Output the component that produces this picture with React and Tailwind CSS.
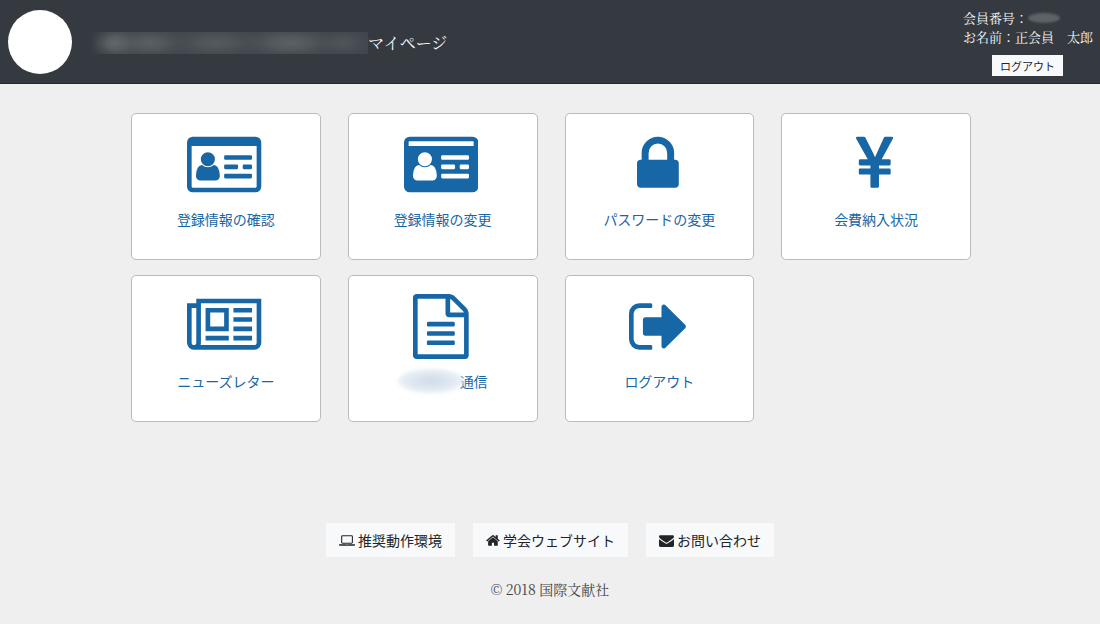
import React from "react";

function Glyph({ viewBox, className, children }) {
  return (
    <svg viewBox={viewBox} className={className} fill="currentColor" aria-hidden="true">
      {children}
    </svg>
  );
}

const person =
  "M382 182a194 194 0 1 1 388 0a194 194 0 1 1 -388 0z M414 340q72 62 162 62t162 -62q74 6 112 70q56 92 56 228q0 60 -37 96t-82 36h-422q-45 0 -82 -36t-37 -96q0 -136 56 -228q38 -64 112 -70z";
const bar = (x, y, w) =>
  `M${x + 32} ${y}h${w - 64}q32 0 32 32v64q0 32 -32 32h-${w - 64}q-32 0 -32 -32v-64q0 -32 32 -32z`;
const cardLines = [bar(1024, 640, 768), bar(1024, 896, 384), bar(1536, 896, 256), bar(1024, 1152, 768)].join(" ");

const icons = {
  cardOutline: {
    box: "0 0 2048 1792",
    art: (
      <>
        <path
          fillRule="evenodd"
          d="M160 128h1728q66 0 113 47t47 113v1216q0 66-47 113t-113 47h-1728q-66 0-113-47t-47-113v-1216q0-66 47-113t113-47zM128 384v1120q0 13 9.500 22.500t22.500 9.500h1728q13 0 22.500-9.500t9.500-22.500v-1120z"
        />
        <path d={person} transform="translate(0 568)" />
        <path d={cardLines} />
      </>
    ),
  },
  cardSolid: {
    box: "0 0 2048 1792",
    art: (
      <>
        <path
          fillRule="evenodd"
          d="M160 128h1728q66 0 113 47t47 113v1216q0 66-47 113t-113 47h-1728q-66 0-113-47t-47-113v-1216q0-66 47-113t113-47zM128 266v118h1792v-118q0-10-10-10h-1772q-10 0-10 10z"
        />
        <g fill="#fff">
          <path d={person} transform="translate(0 568)" />
          <path d={cardLines} />
        </g>
      </>
    ),
  },
  lock: {
    box: "320 0 1152 1792",
    art: (
      <path d="M640 768h512v-192q0-106-75-181t-181-75-181 75-75 181v192zm832 96v576q0 40-28 68t-68 28h-960q-40 0-68-28t-28-68v-576q0-40 28-68t68-28h32v-192q0-184 132-316t316-132 316 132 132 316v192h32q40 0 68 28t28 68z" />
    ),
  },
  yen: {
    box: "384 0 1024 1792",
    art: (
      <path d="M985.500 1536h-172q-13 0-22.500-9t-9.500-23v-330h-288q-13 0-22.500-9t-9.500-23v-103q0-13 9.500-22.500t22.500-9.500h288v-85h-288q-13 0-22.500-9t-9.500-23v-104q0-13 9.500-22.500t22.500-9.500h214l-321-578q-8-16 0-32 10-16 28-16h194q19 0 29 18l215 425q19 38 56 125 10-24 30.500-68t27.500-61l191-420q8-19 29-19h191q17 0 27 16 9 14 1 31l-313 579h215q13 0 22.500 9.500t9.500 22.500v104q0 14-9.500 23t-22.500 9h-290v85h290q13 0 22.500 9.500t9.500 22.500v103q0 14-9.500 23t-22.500 9h-290v330q0 13-9.500 22.500t-22.500 9.500z" />
    ),
  },
  news: {
    box: "0 0 2048 1792",
    art: (
      <path d="M1024 512h-384v384h384v-384zm128 640v128h-640v-128h640zm0-768v640h-640v-640h640zm640 768v128h-512v-128h512zm0-256v128h-512v-128h512zm0-256v128h-512v-128h512zm0-256v128h-512v-128h512zm-1536 960v-960h-128v960q0 26 19 45t45 19 45-19 19-45zm1664 0v-1088h-1536v1088q0 33-11 64h1483q26 0 45-19t19-45zm128-1216v1216q0 80-56 136t-136 56h-1664q-80 0-136-56t-56-136v-1088h256v-128h1792z" />
    ),
  },
  file: {
    box: "128 0 1536 1792",
    art: (
      <path d="M1596 380q28 28 48 76t20 88v1152q0 40-28 68t-68 28h-1344q-40 0-68-28t-28-68v-1600q0-40 28-68t68-28h896q40 0 88 20t76 48zm-444-244v376h376q-10-29-22-41l-313-313q-12-12-41-22zm384 1528v-1024h-416q-40 0-68-28t-28-68v-416h-768v1536h1280zm-1024-864q0-14 9-23t23-9h704q14 0 23 9t9 23v64q0 14-9 23t-23 9h-704q-14 0-23-9t-9-23v-64zm736 224q14 0 23 9t9 23v64q0 14-9 23t-23 9h-704q-14 0-23-9t-9-23v-64q0-14 9-23t23-9h704zm0 256q14 0 23 9t9 23v64q0 14-9 23t-23 9h-704q-14 0-23-9t-9-23v-64q0-14 9-23t23-9h704z" />
    ),
  },
  signOut: {
    box: "64 0 1568 1792",
    art: (
      <path d="M704 1440q0 4 1 20t.5 26.500-3 23.500-10 19.500-20.500 6.500h-320q-119 0-203.500-84.500t-84.500-203.500v-704q0-119 84.500-203.500t203.500-84.500h320q13 0 22.500 9.500t9.500 22.500q0 4 1 20t.5 26.500-3 23.500-10 19.500-20.500 6.500h-320q-66 0-113 47t-47 113v704q0 66 47 113t113 47h312l11.500 1 11.500 3 8 5.500 7 9 2 13.500zm928-544q0 26-19 45l-544 544q-19 19-45 19t-45-19-19-45v-288h-448q-26 0-45-19t-19-45v-384q0-26 19-45t45-19h448v-288q0-26 19-45t45-19 45 19l544 544q19 19 19 45z" />
    ),
  },
  laptop: {
    box: "0 0 1920 1792",
    art: (
      <path d="M416 1280q-66 0-113-47t-47-113v-704q0-66 47-113t113-47h1088q66 0 113 47t47 113v704q0 66-47 113t-113 47h-1088zm-32-864v704q0 13 9.500 22.500t22.500 9.500h1088q13 0 22.500-9.500t9.500-22.500v-704q0-13-9.500-22.500t-22.500-9.500h-1088q-13 0-22.500 9.500t-9.500 22.500zm1376 928h160v96q0 40-47 68t-113 28h-1600q-66 0-113-28t-47-68v-96h1760zm-720 96q16 0 16-16t-16-16h-160q-16 0-16 16t16 16h160z" />
    ),
  },
  home: {
    box: "64 0 1664 1792",
    art: (
      <path d="M1472 992v480q0 26-19 45t-45 19h-384v-384h-256v384h-384q-26 0-45-19t-19-45v-480q0-1 .5-3t.5-3l575-474 575 474q1 2 1 6zm223-69l-62 74q-8 9-21 11h-3q-13 0-21-7l-692-577-692 577q-12 8-24 7-13-2-21-11l-62-74q-8-10-7-23.500t11-21.500l719-599q32-26 76-26t76 26l244 204v-195q0-14 9-23t23-9h192q14 0 23 9t9 23v408l219 182q10 8 11 21.500t-7 23.500z" />
    ),
  },
  envelope: {
    box: "0 0 1792 1792",
    art: (
      <path d="M1792 710v794q0 66-47 113t-113 47h-1472q-66 0-113-47t-47-113v-794q44 49 101 87 362 246 497 345 57 42 92.500 65.500t94.500 48 110 24.500h2q51 0 110-24.500t94.500-48 92.500-65.500q170-123 498-345 57-39 100-87zm0-294q0 79-49 151t-122 123q-376 261-468 325-10 7-42.500 31t-54 38.500-52 32.500-57.500 27-50 9h-2q-23 0-50-9t-57.500-27-52-32.500-54-38.500-42.500-31q-91-64-262-182.500t-205-142.500q-62-42-117-115.500t-55-136.500q0-78 41.500-130t118.500-52h1472q65 0 112.500 47t47.500 113z" />
    ),
  },
};

const menu = [
  { icon: "cardOutline", label: "登録情報の確認" },
  { icon: "cardSolid", label: "登録情報の変更" },
  { icon: "lock", label: "パスワードの変更" },
  { icon: "yen", label: "会費納入状況" },
  { icon: "news", label: "ニューズレター" },
  { icon: "file", label: "通信", masked: true },
  { icon: "signOut", label: "ログアウト" },
];

const footerLinks = [
  { icon: "laptop", label: "推奨動作環境" },
  { icon: "home", label: "学会ウェブサイト" },
  { icon: "envelope", label: "お問い合わせ" },
];

function MenuCard({ icon, label, masked }) {
  return (
    <a
      href="#"
      className="flex h-[147px] flex-col items-center rounded-[5px] border border-[#bbb] bg-white pt-[18px] text-[#1766a6]"
    >
      <span className="pr-[3px]">
        <Glyph viewBox={icons[icon].box} className="block h-[65px] w-auto">
          {icons[icon].art}
        </Glyph>
      </span>
      <span className="mt-[10px] flex items-center text-[14px] leading-6">
        {masked && (
          <span className="-mr-1 h-6 w-[66px] rounded-[50%] bg-radial from-[#cddbe8] to-[#eaf0f5] to-70% blur-[2px]" />
        )}
        {label}
      </span>
    </a>
  );
}

export default function App() {
  return (
    <div className="min-h-screen bg-[#efefef] font-['Noto_Sans_CJK_JP',sans-serif] text-[#212529]">
      <header className="flex items-center justify-between border-b border-[#24292d] bg-[#343a40] pr-[7px] pl-2 font-['Noto_Serif_CJK_JP','Noto_Sans_CJK_JP',serif] text-[#f8f9fa]">
        <div className="flex items-center">
          <span className="size-16 rounded-full bg-white" />
          <h1 className="ml-4 flex items-center pt-0.5 text-[16px] leading-6">
            <svg viewBox="0 0 280 22" className="block h-[22px] w-[280px]" aria-hidden="true">
              <defs>
                <radialGradient id="smudge">
                  <stop offset="0" stopColor="#646a6c" />
                  <stop offset="0.4" stopColor="#5d6366" stopOpacity="0.75" />
                  <stop offset="1" stopColor="#4a4f54" stopOpacity="0" />
                </radialGradient>
                <linearGradient id="fade">
                  <stop offset="0" stopColor="#343a40" />
                  <stop offset="0.1" stopColor="#42484d" />
                  <stop offset="1" stopColor="#40464c" />
                </linearGradient>
              </defs>
              <rect width="280" height="22" fill="url(#fade)" />
              <ellipse cx="28" cy="11" rx="26" ry="16" fill="url(#smudge)" />
              <ellipse cx="62" cy="11" rx="40" ry="16" fill="url(#smudge)" opacity="0.7" />
              <ellipse cx="128" cy="11" rx="50" ry="16" fill="url(#smudge)" opacity="0.55" />
              <ellipse cx="202" cy="11" rx="54" ry="17" fill="url(#smudge)" opacity="0.75" />
              <ellipse cx="256" cy="11" rx="28" ry="15" fill="url(#smudge)" opacity="0.4" />
            </svg>
            マイページ
          </h1>
        </div>
        <div className="flex flex-col pt-2 pb-[7px] text-[13px] leading-[19px]">
          <p className="flex items-center">
            会員番号：
            <span className="h-[10px] w-8 rounded-[50%] bg-[#5d6266] blur-[1px]" />
          </p>
          <p>お名前：正会員　太郎</p>
          <button
            type="button"
            className="mt-[9px] mr-[30px] h-[21px] self-end bg-[#f8f9fa] px-2 font-['Noto_Sans_CJK_JP',sans-serif] text-[11px] leading-5 text-[#212529]"
          >
            ログアウト
          </button>
        </div>
      </header>

      <main className="mx-auto max-w-[842px] pt-[29px] pl-0.5">
        <nav className="grid grid-cols-4 gap-x-[27px] gap-y-[15px]">
          {menu.map((item) => (
            <MenuCard key={item.label} {...item} />
          ))}
        </nav>
      </main>

      <footer className="pt-[101px] text-center">
        <div className="flex justify-center gap-[18px]">
          {footerLinks.map(({ icon, label }) => (
            <a
              key={label}
              href="#"
              className="flex h-[34px] items-center gap-[3px] bg-[#f8f9fa] px-[13px] text-[14px] leading-6"
            >
              <Glyph viewBox={icons[icon].box} className="block h-[15px] w-auto">
                {icons[icon].art}
              </Glyph>
              {label}
            </a>
          ))}
        </div>
        <p className="mt-5 font-['Noto_Serif_CJK_JP','Noto_Sans_CJK_JP',serif] text-[14px] leading-6 text-[#444]">
          © 2018 国際文献社
        </p>
      </footer>
    </div>
  );
}
